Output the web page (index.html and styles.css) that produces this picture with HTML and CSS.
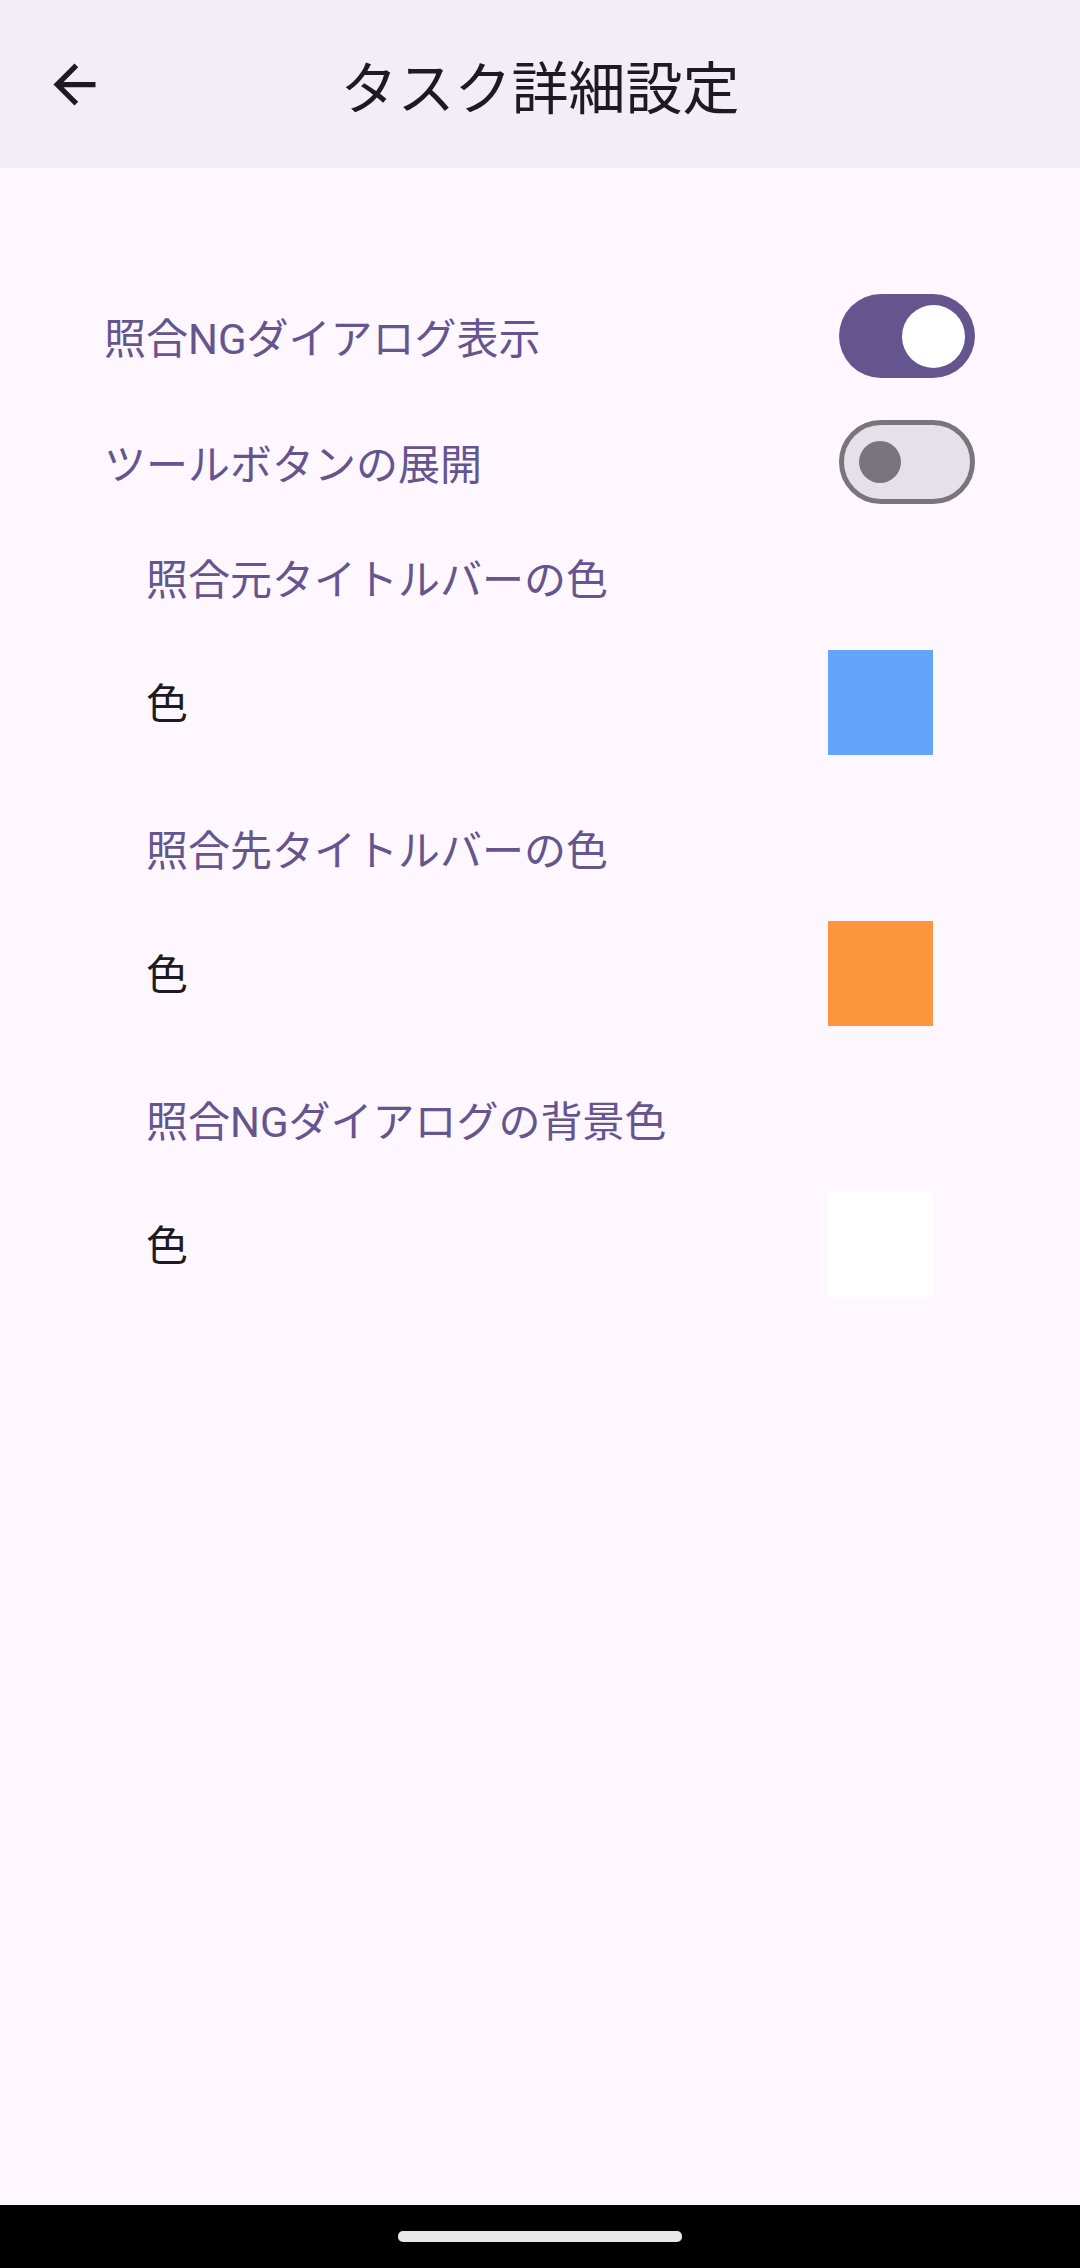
FILE: index.html
```html
<!DOCTYPE html>
<html lang="ja">
<head>
<meta charset="utf-8">
<title>タスク詳細設定</title>
<link rel="stylesheet" href="styles.css">
</head>
<body>
<div class="screen">
  <header class="appbar">
    <div class="nav-slot">
      <button class="nav-btn" aria-label="戻る">
        <svg class="nav-icon" viewBox="0 0 24 24" width="63" height="63"><path d="M20 11H7.83l5.59-5.59L12 4l-8 8 8 8 1.41-1.41L7.83 13H20v-2z" fill="#1d1b20"/></svg>
      </button>
    </div>
    <h1 class="title">タスク詳細設定</h1>
    <div class="end-slot"></div>
  </header>

  <main class="content">
    <div class="switch-row">
      <span class="label">照合NGダイアログ表示</span>
      <span class="switch switch-on"><span class="thumb"></span></span>
    </div>
    <div class="switch-row">
      <span class="label">ツールボタンの展開</span>
      <span class="switch switch-off"><span class="thumb"></span></span>
    </div>

    <div class="groups">
      <section class="color-group">
        <div class="group-title">照合元タイトルバーの色</div>
        <div class="color-row">
          <span class="color-label">色</span>
          <span class="swatch swatch-blue"></span>
        </div>
      </section>
      <section class="color-group">
        <div class="group-title">照合先タイトルバーの色</div>
        <div class="color-row">
          <span class="color-label">色</span>
          <span class="swatch swatch-orange"></span>
        </div>
      </section>
      <section class="color-group">
        <div class="group-title">照合NGダイアログの背景色</div>
        <div class="color-row">
          <span class="color-label">色</span>
          <span class="swatch swatch-white"></span>
        </div>
      </section>
    </div>
  </main>

  <div class="navbar"><span class="handle"></span></div>
</div>
</body>
</html>
```

FILE: styles.css
```css
* {
  box-sizing: border-box;
}

html, body {
  margin: 0;
  padding: 0;
}

body {
  background: #fef7ff;
  font-family: Roboto, "Noto Sans CJK JP", sans-serif;
}

.screen {
  width: 1080px;
  height: 2268px;
  display: flex;
  flex-direction: column;
  background: #fef7ff;
  overflow: hidden;
}

.appbar {
  height: 168px;
  flex: 0 0 168px;
  background: #f3edf7;
  display: grid;
  grid-template-columns: 1fr auto 1fr;
  align-items: center;
}

.nav-slot {
  display: flex;
  align-items: center;
  padding-left: 43px;
}

.nav-btn {
  width: 63px;
  height: 63px;
  padding: 0;
  margin: 0;
  border: none;
  background: transparent;
  display: flex;
  align-items: center;
  justify-content: center;
}

.nav-icon {
  display: block;
}

.title {
  margin: 0;
  font-family: "Noto Sans CJK JP", sans-serif;
  font-weight: 400;
  font-size: 57px;
  line-height: 84px;
  color: #1d1b20;
  padding-top: 0;
}

.content {
  flex: 1 1 auto;
  padding-top: 105px;
  display: flex;
  flex-direction: column;
}

.switch-row {
  height: 126px;
  display: flex;
  align-items: center;
  justify-content: space-between;
  padding: 0 105px 0 104px;
}

.label {
  font-size: 42px;
  line-height: 60px;
  color: #65558f;
  padding-top: 8px;
}

.switch {
  width: 136px;
  height: 84px;
  border-radius: 42px;
  display: flex;
  align-items: center;
}

.switch-on {
  background: #65558f;
  justify-content: flex-end;
  padding: 0 10.5px;
}

.switch-on .thumb {
  width: 63px;
  height: 63px;
  border-radius: 50%;
  background: #ffffff;
}

.switch-off {
  background: #e6e0e9;
  border: 5px solid #79747e;
  justify-content: flex-start;
  padding-left: 15px;
}

.switch-off .thumb {
  width: 42px;
  height: 42px;
  border-radius: 50%;
  background: #79747e;
}

.groups {
  padding-top: 13px;
  display: flex;
  flex-direction: column;
  gap: 27px;
}

.color-group {
  display: flex;
  flex-direction: column;
}

.group-title {
  height: 84px;
  display: flex;
  align-items: center;
  padding-left: 146px;
  font-size: 42px;
  line-height: 60px;
  color: #65558f;
  padding-top: 2px;
}

.color-row {
  height: 160px;
  display: flex;
  align-items: center;
  justify-content: space-between;
  padding: 0 147px 0 146px;
}

.color-label {
  font-size: 42px;
  line-height: 60px;
  color: #1d1b20;
  padding-top: 6px;
}

.swatch {
  width: 105px;
  height: 105px;
}

.swatch-blue {
  background: #62a5fa;
}

.swatch-orange {
  background: #fd953e;
}

.swatch-white {
  background: #ffffff;
}

.navbar {
  flex: 0 0 63px;
  height: 63px;
  background: #000000;
  display: flex;
  align-items: center;
  justify-content: center;
}

.handle {
  width: 284px;
  height: 10.5px;
  border-radius: 5px;
  background: #e8e8e8;
}
```
